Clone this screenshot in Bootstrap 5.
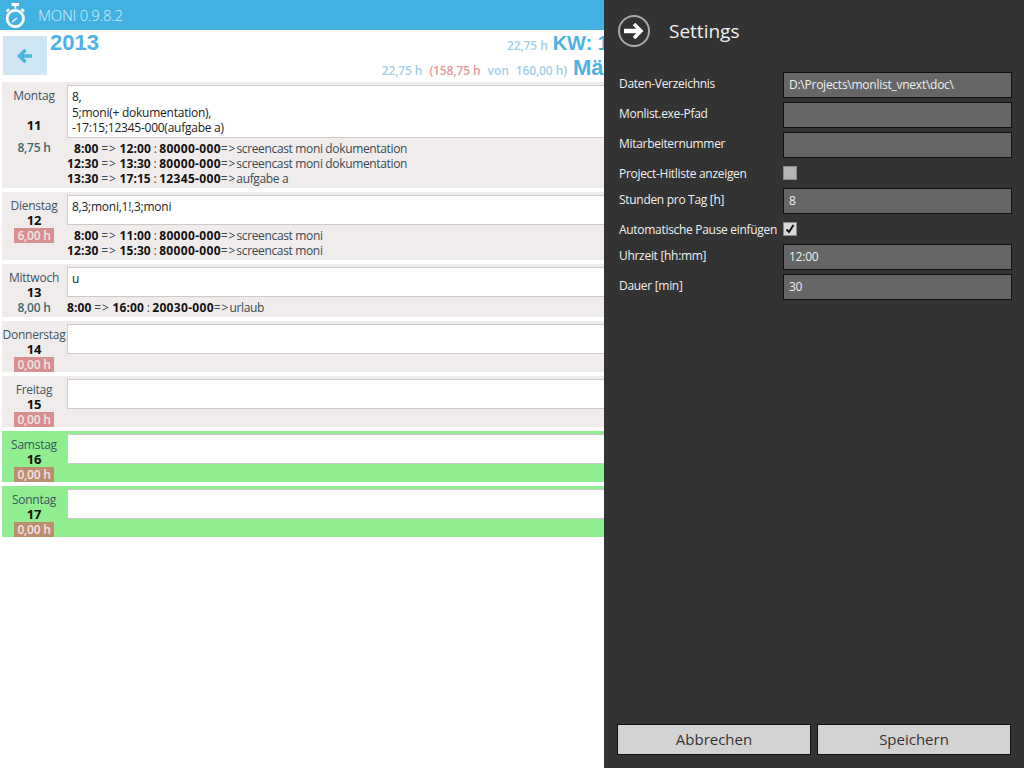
<!DOCTYPE html>
<html lang="de">
<head>
<meta charset="utf-8">
<title>MONI</title>
<link href="https://cdn.jsdelivr.net/npm/bootstrap@5.3.0/dist/css/bootstrap.min.css" rel="stylesheet">
<style>
html,body{height:768px;overflow:hidden;margin:0}
body{font-family:"Open Sans","Liberation Sans",sans-serif;font-size:12px;line-height:15px;color:#2f3b40;background:#fff;position:relative;width:1024px;letter-spacing:-.25px}
.app-bar{height:30px;background:#41b1e1;color:#d8eef8;font-size:15px;padding-left:5px;gap:11px;font-weight:300}
.page-head{height:52px;padding:6px 0 0 3px}
.back-tile{width:44px;height:39px;background:#d0e6f2}
.year-txt{font-size:22px;line-height:14px;font-weight:700;color:#4db3e3;margin-left:3px;font-family:"Liberation Sans",sans-serif;letter-spacing:0}
.sum-zone{flex:1;white-space:nowrap}
.sum-line{display:flex;align-items:baseline;justify-content:flex-end;font-weight:600;color:#a3cfe6;font-size:12px;letter-spacing:-.1px}
.sum-kw{padding-right:405px;height:26px}
.sum-month{padding-right:401px;height:26px;margin-top:-2px}
.sum-big{font-family:"Liberation Sans",sans-serif;font-weight:700;font-size:22px;color:#4db3e3;margin-left:6px;letter-spacing:0}
.sum-kw .sum-big{font-size:20px;margin-left:5px}
.sum-red{color:#e39a9a;margin:0 7px}
.sum-gap{margin-left:7px}
.day-list{padding:0 0 0 2px;gap:4px}
.day-row{background:#f1ecec;padding-top:3px}
.day-row.wknd{background:#90ee90}
.day-side{width:64px;flex:none;text-align:center;color:#3d5560;padding-top:3px}
.day-num{font-weight:700;color:#111;font-size:13px}
.day-num.tall{margin-top:15px}
.hrs{font-weight:600;color:#3e6a6e;display:block;line-height:15px}
.hrs.drop{margin-top:7px}
.hrs.low{background:#d88f8f;color:#f4e4e4;width:40px;margin:0 auto}
.wknd .hrs.low{background:#bb8d70}
.day-body{flex:1;min-width:0;margin-left:1px;padding-bottom:2px}
.entry{display:block;width:100%;height:30px;border:1px solid #cfcaca;background:#fff;padding:3px 4px;font-family:inherit;font-size:12px;line-height:15.5px;color:#222;resize:none;overflow:hidden;border-radius:0;letter-spacing:inherit}
.entry.tall{height:53px}
.parsed{padding-top:3px;color:#3a4a50;white-space:nowrap;letter-spacing:-.35px}
.parsed b{color:#111;font-weight:700;letter-spacing:.1px}
.parsed b.cd{letter-spacing:.32px}
.parsed i{font-style:normal;letter-spacing:.9px}
.pad-time{padding-left:7px}
.side-panel{position:absolute;left:604px;top:0;width:420px;height:768px;background:#333;color:#f0f0f0;padding:0 12px 13px 13px}
.panel-head{height:72px;padding:0 0 10px 0;gap:18px;font-size:19px;letter-spacing:0}
.field-row{display:flex;align-items:center;min-height:26px;margin-bottom:4px;padding-left:2px}
.field-row.chk{min-height:22px}
.field-name{width:164px;flex:none;white-space:nowrap;margin-bottom:4px;letter-spacing:-.3px}
.chk .field-name{margin-bottom:0}
.field-box{width:229px;height:26px;background:#666;border:1px solid #111;color:#eee;padding:0 5px 1px;font:inherit;letter-spacing:inherit;border-radius:0}
.tick{width:14px;height:14px;background:#b5b5b5;border:1px solid #8a8a8a;display:flex;align-items:center;justify-content:center}
.tick.on{background:#d8d8d8}
.act{width:194px;height:31px;background:#d3d3d3;border:1px solid #111;color:#333;font-size:15px;border-radius:0;padding:0;font-family:inherit;letter-spacing:0}
.act-row{gap:6px;padding-right:1px}
</style>
</head>
<body>
<div class="app-bar d-flex align-items-center">
<svg width="22" height="26" viewBox="0 0 22 26" fill="none" stroke="#fff"><rect x="6.500" y="1" width="7.500" height="3" fill="#fff" stroke="none"/><rect x="9.300" y="3" width="2" height="3.500" fill="#fff" stroke="none"/><path d="M1.500 9.500l2.500-2.500M19 9.500l-2.500-2.500" stroke-width="2.200"/><circle cx="10.300" cy="16.500" r="8.200" stroke-width="2.800"/><path d="M7 20l5-4" stroke-width="1.500"/></svg>
<span>MONI 0.9.8.2</span>
</div>
<div class="page-head d-flex align-items-start">
<div class="back-tile d-flex align-items-center justify-content-center">
<svg width="16" height="16" viewBox="0 0 16 16" fill="none" stroke="#4db3e3" stroke-width="3.400"><path d="M15 8H3M8.500 2L2.500 8l6 6"/></svg>
</div>
<div class="year-txt">2013</div>
<div class="sum-zone">
<div class="sum-line sum-kw"><span>22,75 h</span><span class="sum-big">KW: 11</span></div>
<div class="sum-line sum-month"><span>22,75 h</span><span class="sum-red">(158,75 h</span><span>von</span><span class="sum-gap">160,00 h)</span><span class="sum-big">März</span></div>
</div>
</div>
<div class="day-list d-flex flex-column">
<div class="day-row d-flex">
<div class="day-side"><div>Montag</div><div class="day-num tall">11</div><span class="hrs drop">8,75 h</span></div>
<div class="day-body"><textarea class="entry tall" readonly>8,
5;moni(+ dokumentation),
-17:15;12345-000(aufgabe a)</textarea>
<div class="parsed"><div class="pad-time"><b>8:00</b> <i>=&gt;</i> <b>12:00</b> : <b class="cd">80000-000</b><i>=&gt;</i>screencast moni dokumentation</div><div><b>12:30</b> <i>=&gt;</i> <b>13:30</b> : <b class="cd">80000-000</b><i>=&gt;</i>screencast moni dokumentation</div><div><b>13:30</b> <i>=&gt;</i> <b>17:15</b> : <b class="cd">12345-000</b><i>=&gt;</i>aufgabe a</div></div></div>
</div>
<div class="day-row d-flex">
<div class="day-side"><div>Dienstag</div><div class="day-num">12</div><span class="hrs low">6,00 h</span></div>
<div class="day-body"><textarea class="entry" readonly>8,3;moni,1!,3;moni</textarea>
<div class="parsed"><div class="pad-time"><b>8:00</b> <i>=&gt;</i> <b>11:00</b> : <b class="cd">80000-000</b><i>=&gt;</i>screencast moni</div><div><b>12:30</b> <i>=&gt;</i> <b>15:30</b> : <b class="cd">80000-000</b><i>=&gt;</i>screencast moni</div></div></div>
</div>
<div class="day-row d-flex">
<div class="day-side"><div>Mittwoch</div><div class="day-num">13</div><span class="hrs">8,00 h</span></div>
<div class="day-body"><textarea class="entry" readonly>u</textarea>
<div class="parsed"><div><b>8:00</b> <i>=&gt;</i> <b>16:00</b> : <b class="cd">20030-000</b><i>=&gt;</i>urlaub</div></div></div>
</div>
<div class="day-row d-flex">
<div class="day-side"><div>Donnerstag</div><div class="day-num">14</div><span class="hrs low">0,00 h</span></div>
<div class="day-body"><textarea class="entry" readonly></textarea></div>
</div>
<div class="day-row d-flex">
<div class="day-side"><div>Freitag</div><div class="day-num">15</div><span class="hrs low">0,00 h</span></div>
<div class="day-body"><textarea class="entry" readonly></textarea></div>
</div>
<div class="day-row wknd d-flex">
<div class="day-side"><div>Samstag</div><div class="day-num">16</div><span class="hrs low">0,00 h</span></div>
<div class="day-body"><textarea class="entry" readonly></textarea></div>
</div>
<div class="day-row wknd d-flex">
<div class="day-side"><div>Sonntag</div><div class="day-num">17</div><span class="hrs low">0,00 h</span></div>
<div class="day-body"><textarea class="entry" readonly></textarea></div>
</div>
</div>
<aside class="side-panel d-flex flex-column">
<div class="panel-head d-flex align-items-center">
<svg width="34" height="34" viewBox="0 0 34 34" fill="none" stroke="#fff"><circle cx="17" cy="17" r="15" stroke="#aaa" stroke-width="2"/><path d="M7 17h16" stroke-width="4.500"/><path d="M17 10l7 7-7 7" stroke-width="3.500"/></svg>
<span>Settings</span>
</div>
<div class="field-row"><span class="field-name">Daten-Verzeichnis</span><input class="field-box" value="D:\Projects\monlist_vnext\doc\" readonly></div>
<div class="field-row"><span class="field-name">Monlist.exe-Pfad</span><input class="field-box" readonly></div>
<div class="field-row"><span class="field-name">Mitarbeiternummer</span><input class="field-box" readonly></div>
<div class="field-row chk"><span class="field-name">Project-Hitliste anzeigen</span><span class="tick"></span></div>
<div class="field-row"><span class="field-name">Stunden pro Tag [h]</span><input class="field-box" value="8" readonly></div>
<div class="field-row chk"><span class="field-name">Automatische Pause einfügen</span><span class="tick on"><svg width="10" height="10" viewBox="0 0 10 10" fill="none" stroke="#111" stroke-width="2"><path d="M1.500 5.500L4 8l4.500-7"/></svg></span></div>
<div class="field-row"><span class="field-name">Uhrzeit [hh:mm]</span><input class="field-box" value="12:00" readonly></div>
<div class="field-row"><span class="field-name">Dauer [min]</span><input class="field-box" value="30" readonly></div>
<div class="act-row d-flex mt-auto">
<button type="button" class="btn act">Abbrechen</button>
<button type="button" class="btn act">Speichern</button>
</div>
</aside>
<script src="https://cdn.jsdelivr.net/npm/bootstrap@5.3.0/dist/js/bootstrap.bundle.min.js"></script>
</body>
</html>
